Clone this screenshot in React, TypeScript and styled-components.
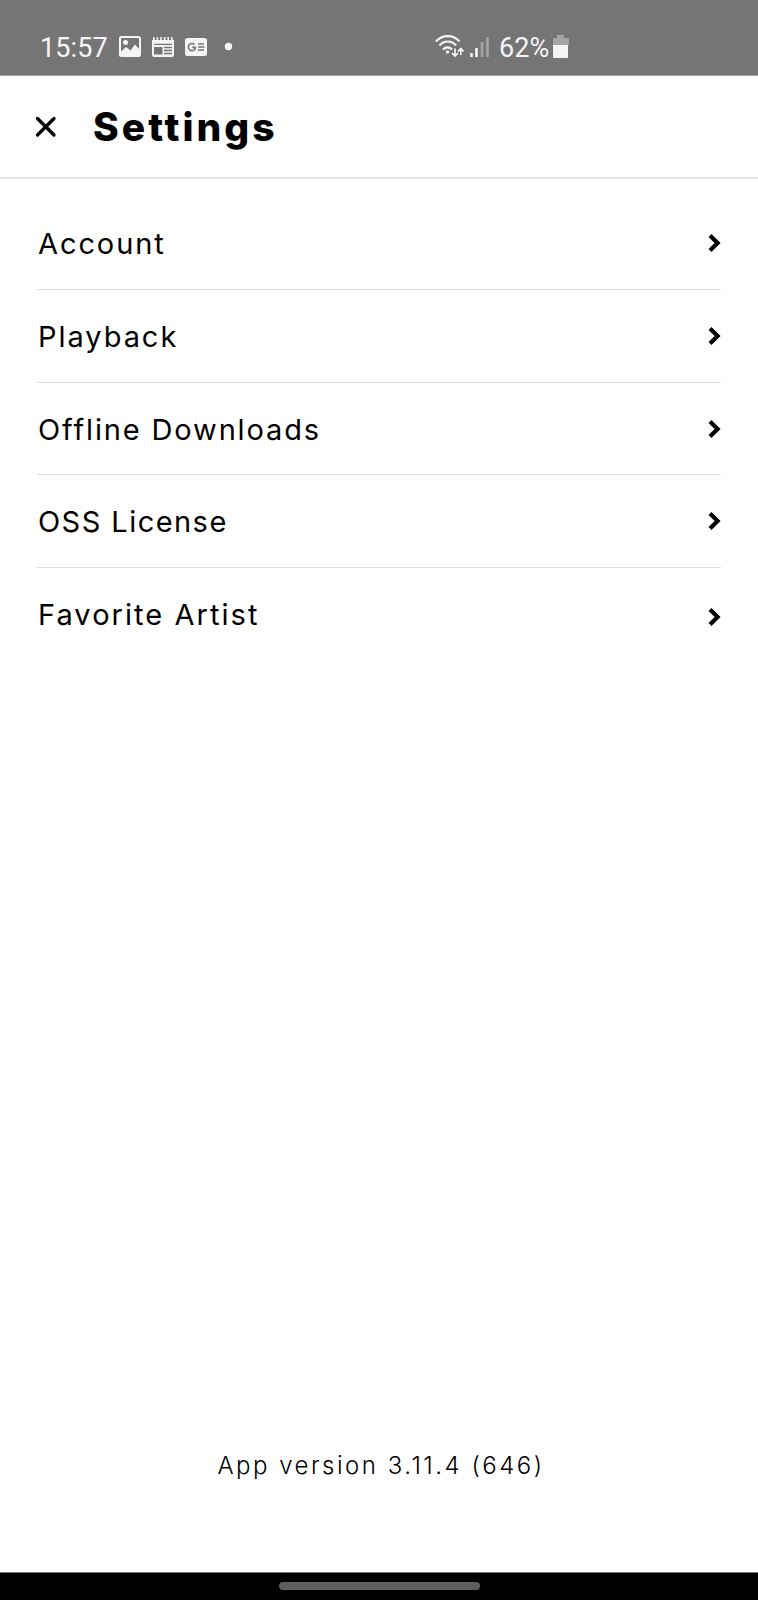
import React from "react";
import styled, { createGlobalStyle } from "styled-components";

const GlobalStyle = createGlobalStyle`
  * { box-sizing: border-box; }
  body { margin: 0; background: #fff; }
`;

const Screen = styled.div`
  display: flex;
  flex-direction: column;
  width: 758px;
  height: 1600px;
  background: #fff;
  color: #000;
  font-family: Inter, Lato, "Liberation Sans", sans-serif;
  overflow: hidden;
`;

const StatusBar = styled.div`
  display: flex;
  align-items: center;
  height: 76px;
  padding: 19px 0 0 40px;
  background: #757575;
  border-bottom: 1px solid #a3a3a3;
  color: #f5f5f5;
  font-family: Roboto, sans-serif;
  font-size: 27px;
  line-height: 32px;
  flex: none;
`;

const Clock = styled.span`
  width: 79px;
  padding-top: 2px;
  letter-spacing: 0.1px;
`;

const Notifications = styled.svg`
  width: 120px;
  height: 32px;
  flex: none;
`;

const Signals = styled.svg`
  width: 60px;
  height: 32px;
  margin-left: 194px;
  flex: none;
`;

const Percent = styled.span`
  width: 54px;
  margin-left: 6px;
  padding-top: 2px;
  letter-spacing: 0.1px;
  white-space: nowrap;
`;

const Battery = styled.svg`
  width: 18px;
  height: 32px;
  flex: none;
`;

const Header = styled.header`
  display: flex;
  align-items: center;
  height: 103px;
  padding: 0 0 0 35px;
  border-bottom: 2px solid #e4e4e4;
  flex: none;
`;

const CloseIcon = styled.svg`
  width: 22px;
  height: 22px;
  margin: 1px 36px 0 0;
`;

const Title = styled.h1`
  margin: 0;
  font-size: 39px;
  line-height: 48px;
  font-weight: 800;
  letter-spacing: 3px;
`;

const List = styled.ul`
  list-style: none;
  margin: 0;
  padding: 18px 37px 0;
  flex: 1;
`;

const Row = styled.li<{ $height: number; $last?: boolean }>`
  display: flex;
  align-items: center;
  justify-content: space-between;
  height: ${(p) => p.$height}px;
  border-bottom: ${(p) => (p.$last ? "none" : "1px solid #dedede")};
`;

const Label = styled.span<{ $tracking: number }>`
  font-size: 29px;
  line-height: 36px;
  letter-spacing: ${(p) => p.$tracking}px;
  padding: 2px 0 0 1px;
`;

const Chevron = styled.svg<{ $drop: number }>`
  width: 14px;
  height: 20px;
  margin-top: ${(p) => p.$drop}px;
`;

const Version = styled.footer`
  height: 134px;
  padding: 2px 0 0 4px;
  text-align: center;
  font-size: 24px;
  line-height: 52px;
  font-weight: 350;
  letter-spacing: 2.5px;
  flex: none;
`;

const NavigationBar = styled.div`
  display: flex;
  justify-content: center;
  height: 28px;
  padding-top: 9px;
  background: #000;
  border-top: 1px solid #777;
  flex: none;
`;

const HomeHandle = styled.div`
  width: 201px;
  height: 8px;
  border-radius: 4px;
  background: #5e5e5e;
`;

const items = [
  { label: "Account", tracking: 1.9, height: 93, drop: 0 },
  { label: "Playback", tracking: 1.95, height: 93, drop: 0 },
  { label: "Offline Downloads", tracking: 1.85, height: 92, drop: 0 },
  { label: "OSS License", tracking: 1.45, height: 93, drop: 0 },
  { label: "Favorite Artist", tracking: 2.05, height: 91, drop: 6 },
];

export default function App() {
  return (
    <Screen>
      <GlobalStyle />
      <StatusBar>
        <Clock>15:57</Clock>
        <Notifications viewBox="0 0 120 32" fill="#f5f5f5">
          <rect x="1" y="6" width="20" height="19" rx="1.500" fill="#757575" stroke="#f5f5f5" strokeWidth="2" />
          <path d="M1.500 21l5.500-5 4.500 3.500 4.500-6 4.500 5v6h-19z" />
          <circle cx="6.500" cy="11.500" r="2.500" />
          <path d="M33 9h22v15a2 2 0 0 1-2 2H35a2 2 0 0 1-2-2z" />
          <path d="M34 7.500h20" stroke="#f5f5f5" strokeWidth="3" strokeDasharray="1.600 2" />
          <path d="M35 13.300h18M45 16.500h8M45 19.500h8M45 22.500h8" stroke="#757575" strokeWidth="1.300" fill="none" />
          <path d="M35 16h8.500v7.500H35z" fill="#757575" />
          <rect x="66" y="7" width="22" height="18" rx="2.500" />
          <path d="M75.500 13.600a3.600 3.600 0 1 0 1 2.800h-3.300M79 13h6M79 16h6.500M79 19h6" fill="none" stroke="#757575" strokeWidth="1.600" />
          <circle cx="109.500" cy="15.500" r="3.700" />
        </Notifications>
        <Signals viewBox="0 0 60 32" fill="none" stroke="#f5f5f5" strokeWidth="2.200">
          <path d="M3 10.500a15.500 15.500 0 0 1 23.500 0M6.500 14.500a10.500 10.500 0 0 1 16.500 0M10 18.500a6 6 0 0 1 9 0" />
          <circle cx="14.500" cy="21" r="1.700" fill="#f5f5f5" stroke="none" />
          <path d="M22 17.500v7M19 22l3 3 3-3M27.800 24v-6M25 20.500l2.800-3 2.800 3" strokeWidth="1.700" />
          <path d="M38.500 26v-4M43.500 26v-9" strokeWidth="2.600" />
          <path d="M49 26V11M54.500 26V6" stroke="#a5a5a5" strokeWidth="2.600" />
        </Signals>
        <Percent>62%</Percent>
        <Battery viewBox="0 0 18 32">
          <path d="M4 4h7v3h4a1 1 0 0 1 1 1v6H0V8a1 1 0 0 1 1-1h3z" fill="#a5a5a5" />
          <path d="M0 14h15v12a1 1 0 0 1-1 1H1a1 1 0 0 1-1-1z" fill="#f5f5f5" />
        </Battery>
      </StatusBar>
      <Header>
        <CloseIcon viewBox="0 0 22 22" fill="none" stroke="#000" strokeWidth="3.300" strokeLinecap="round">
          <path d="M2.500 2.500l16.500 16.500M19 2.500L2.500 19" />
        </CloseIcon>
        <Title>Settings</Title>
      </Header>
      <List>
        {items.map((item, i) => (
          <Row key={item.label} $height={item.height} $last={i === items.length - 1}>
            <Label $tracking={item.tracking}>{item.label}</Label>
            <Chevron $drop={item.drop} viewBox="0 0 14 20" fill="none" stroke="#000" strokeWidth="4.200">
              <path d="M3 2.500l7.600 7.500L3 17.500" />
            </Chevron>
          </Row>
        ))}
      </List>
      <Version>App version 3.11.4 (646)</Version>
      <NavigationBar>
        <HomeHandle />
      </NavigationBar>
    </Screen>
  );
}
